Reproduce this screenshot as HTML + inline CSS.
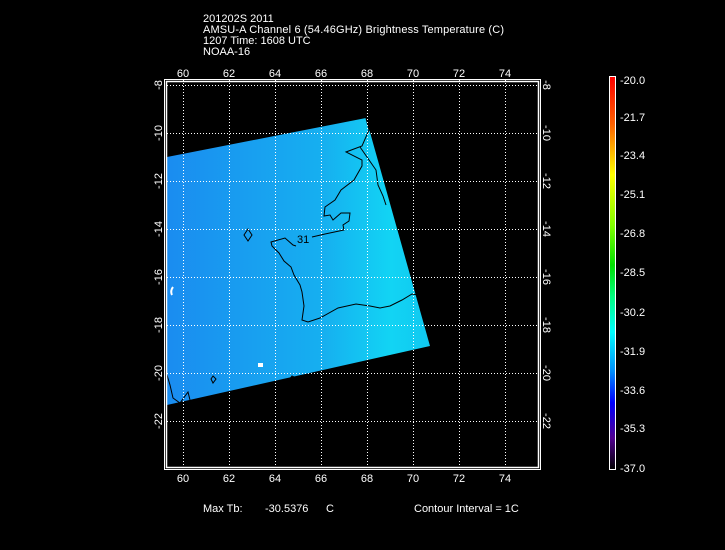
<!DOCTYPE html>
<html><head><meta charset="utf-8"><style>
html,body{margin:0;padding:0;background:#000;width:725px;height:550px;overflow:hidden}
svg{display:block}
text{font-family:"Liberation Sans",sans-serif;fill:#fff;font-size:11px}
</style></head><body>
<svg width="725" height="550" viewBox="0 0 725 550">
<defs>
<linearGradient id="cb" x1="0" y1="0" x2="0" y2="1">
<stop offset="0" stop-color="#ff0000"/>
<stop offset="0.12" stop-color="#ff6000"/>
<stop offset="0.25" stop-color="#ffff00"/>
<stop offset="0.38" stop-color="#80ff00"/>
<stop offset="0.48" stop-color="#00e000"/>
<stop offset="0.56" stop-color="#00ff80"/>
<stop offset="0.65" stop-color="#00ffff"/>
<stop offset="0.75" stop-color="#0090ff"/>
<stop offset="0.83" stop-color="#0000ff"/>
<stop offset="0.92" stop-color="#500090"/>
<stop offset="1" stop-color="#000000"/>
</linearGradient>
<linearGradient id="sw" x1="0" y1="0" x2="1" y2="0">
<stop offset="0" stop-color="#1a8cf0"/>
<stop offset="0.6" stop-color="#16b0f0"/>
<stop offset="0.85" stop-color="#12d4f4"/>
<stop offset="1" stop-color="#10c8f0"/>
</linearGradient>
</defs>
<text x="203" y="22">201202S 2011</text>
<text x="203" y="33" textLength="301">AMSU-A Channel 6 (54.46GHz) Brightness Temperature (C)</text>
<text x="203" y="44">1207 Time: 1608 UTC</text>
<text x="203" y="55">NOAA-16</text>

<polygon points="167,157 366,118 430,346 167,405" fill="url(#sw)"/>
<g fill="none" stroke="#000" stroke-width="1">
<path d="M366,118 L369,130 L362,146 L346,152 L362,160 L362,166 L354,180 L341,190 L335,200 L325,207 L324,216 L330,215 L333,220 L341,213 L350,213 L349,221 L343,225 L344,230 L325,234 L312,237 M296,246 L293,245 L285,238 L271,242 L272,246 L279,253 L284,261 L291,267 L294,275 L300,285 L302,292 L304,306 L302,320 L308,322 L320,318 L338,308 L356,304 L370,306 L380,308 L390,306 L402,300 L412,294 L418,295"/>
<path d="M360,147 L376,170 L378,185 L383,196 L386,205"/>
<path d="M167,375 L170,385 L173,398 L180,403 L188,392 L190,400"/>
<path d="M248,229 L252,235 L248,241 L244,235 Z"/>
<path d="M213,376 L216,379 L213,383 L211,379 Z"/>
<path d="M289,380 L292,376 L296,378"/>
</g>
<text x="297" y="243" font-size="10" fill="#000" style="fill:#000">31</text>
<path d="M173,287 Q170,291 172,295" stroke="#fff" stroke-width="2" fill="none"/>
<rect x="258" y="363" width="5" height="4" fill="#fff"/>

<g stroke="#fff" stroke-dasharray="1,2" stroke-width="1">
<line x1="183.5" y1="80" x2="183.5" y2="469"/>
<line x1="229.5" y1="80" x2="229.5" y2="469"/>
<line x1="275.5" y1="80" x2="275.5" y2="469"/>
<line x1="321.5" y1="80" x2="321.5" y2="469"/>
<line x1="367.5" y1="80" x2="367.5" y2="469"/>
<line x1="413.5" y1="80" x2="413.5" y2="469"/>
<line x1="459.5" y1="80" x2="459.5" y2="469"/>
<line x1="505.5" y1="80" x2="505.5" y2="469"/>
<line x1="167" y1="85.5" x2="537" y2="85.5"/>
<line x1="167" y1="133.5" x2="537" y2="133.5"/>
<line x1="167" y1="181.5" x2="537" y2="181.5"/>
<line x1="167" y1="229.5" x2="537" y2="229.5"/>
<line x1="167" y1="277.5" x2="537" y2="277.5"/>
<line x1="167" y1="325.5" x2="537" y2="325.5"/>
<line x1="167" y1="373.5" x2="537" y2="373.5"/>
<line x1="167" y1="421.5" x2="537" y2="421.5"/>
</g>
<rect x="164.5" y="79.5" width="376" height="390" fill="none" stroke="#fff" stroke-width="1"/>
<rect x="166.5" y="81.5" width="372" height="386" fill="none" stroke="#fff" stroke-width="1.5"/>

<g text-anchor="middle">
<text x="183" y="77">60</text><text x="229" y="77">62</text><text x="275" y="77">64</text><text x="321" y="77">66</text><text x="367" y="77">68</text><text x="413" y="77">70</text><text x="459" y="77">72</text><text x="505" y="77">74</text>
<text x="183" y="482">60</text><text x="229" y="482">62</text><text x="275" y="482">64</text><text x="321" y="482">66</text><text x="367" y="482">68</text><text x="413" y="482">70</text><text x="459" y="482">72</text><text x="505" y="482">74</text>
</g>
<g text-anchor="middle">
<text transform="translate(162,85) rotate(-90)">-8</text>
<text transform="translate(162,133) rotate(-90)">-10</text>
<text transform="translate(162,181) rotate(-90)">-12</text>
<text transform="translate(162,229) rotate(-90)">-14</text>
<text transform="translate(162,277) rotate(-90)">-16</text>
<text transform="translate(162,325) rotate(-90)">-18</text>
<text transform="translate(162,373) rotate(-90)">-20</text>
<text transform="translate(162,421) rotate(-90)">-22</text>
<text transform="translate(543,85) rotate(90)">-8</text>
<text transform="translate(543,133) rotate(90)">-10</text>
<text transform="translate(543,181) rotate(90)">-12</text>
<text transform="translate(543,229) rotate(90)">-14</text>
<text transform="translate(543,277) rotate(90)">-16</text>
<text transform="translate(543,325) rotate(90)">-18</text>
<text transform="translate(543,373) rotate(90)">-20</text>
<text transform="translate(543,421) rotate(90)">-22</text>
</g>

<rect x="609.5" y="76.5" width="6" height="393" fill="url(#cb)" stroke="#fff" stroke-width="1"/>
<g>
<text x="620" y="84">-20.0</text>
<text x="620" y="121">-21.7</text>
<text x="620" y="159">-23.4</text>
<text x="620" y="198">-25.1</text>
<text x="620" y="237">-26.8</text>
<text x="620" y="276">-28.5</text>
<text x="620" y="316">-30.2</text>
<text x="620" y="355">-31.9</text>
<text x="620" y="394">-33.6</text>
<text x="620" y="432">-35.3</text>
<text x="620" y="472">-37.0</text>
</g>

<text x="203" y="512">Max Tb:</text>
<text x="265" y="512">-30.5376</text>
<text x="326" y="512">C</text>
<text x="414" y="512">Contour Interval = 1C</text>
</svg>
</body></html>
